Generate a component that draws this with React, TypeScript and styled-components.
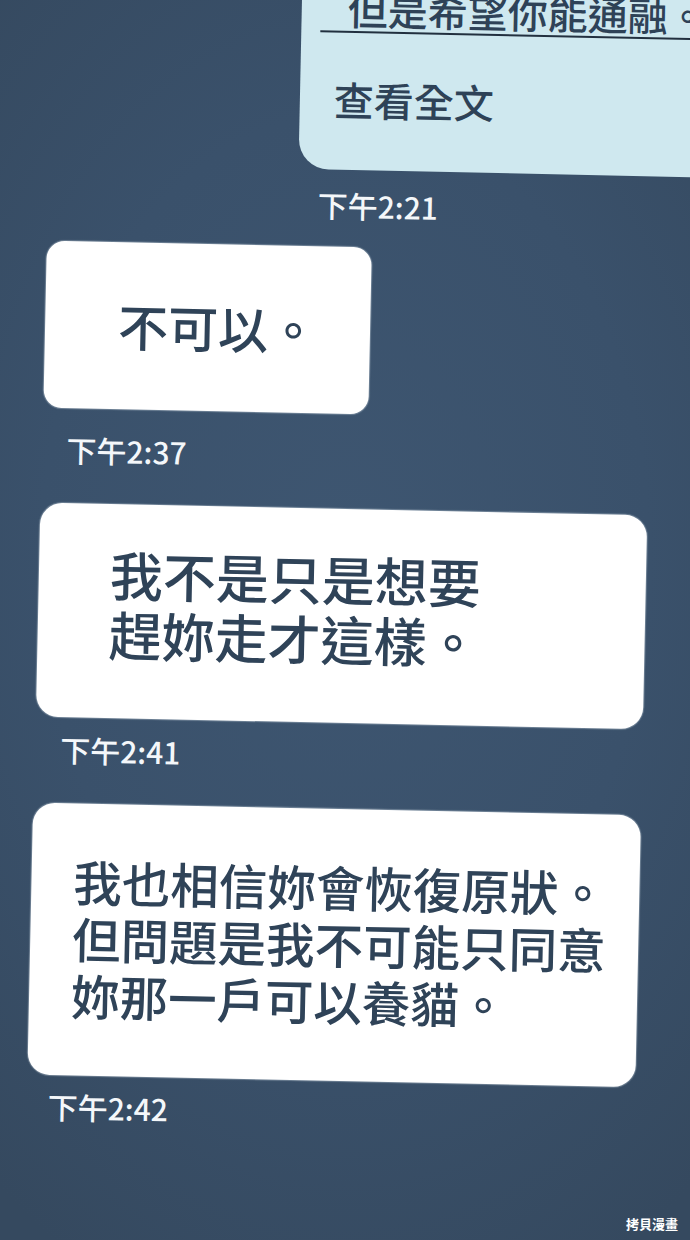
import React from "react";
import styled, { createGlobalStyle } from "styled-components";

const GlobalStyle = createGlobalStyle`
  html, body {
    margin: 0;
    padding: 0;
    background: #34495f;
  }
  body {
    font-family: "Noto Sans CJK TC", "Noto Sans", sans-serif;
  }
`;

const Page = styled.div`
  position: relative;
  width: 690px;
  height: 1240px;
  overflow: hidden;
  background: radial-gradient(
    ellipse 80% 65% at 50% 45%,
    #3e5671 0%,
    #3a516b 55%,
    #35495f 100%
  );
`;

const Scene = styled.div`
  width: 690px;
  height: 1240px;
  display: flex;
  flex-direction: column;
  align-items: flex-start;
  transform: rotate(1.2deg);
  transform-origin: 345px 620px;
  font-family: "Noto Sans CJK TC", "Noto Sans", sans-serif;
`;

const SentBubble = styled.div`
  margin-top: -30px;
  margin-left: 289px;
  width: 480px;
  box-sizing: border-box;
  padding: 15px 0 48px 0;
  background: #cfe8ef;
  border-radius: 0 0 0 30px;
  display: flex;
  flex-direction: column;
  align-items: flex-start;
  color: #2e4257;
`;

const Quote = styled.div`
  margin-left: 46px;
  font-size: 40px;
  line-height: 46px;
  font-weight: 500;
  white-space: nowrap;
`;

const Divider = styled.div`
  margin-left: 19px;
  align-self: stretch;
  height: 2px;
  background: #22303f;
`;

const ViewAll = styled.div`
  margin-top: 43px;
  margin-left: 34px;
  font-size: 40px;
  line-height: 46px;
  font-weight: 500;
`;

const Time = styled.div<{ $left: number; $top: number }>`
  margin-left: ${(p) => p.$left}px;
  margin-top: ${(p) => p.$top}px;
  font-size: 30px;
  line-height: 34px;
  font-weight: 500;
  color: #f4f7fa;
  white-space: nowrap;
`;

const Bubble = styled.div<{
  $left: number;
  $top: number;
  $width: number;
  $height: number;
  $padLeft: number;
  $padBottom: number;
  $size: number;
  $lineHeight: number;
  $radius: number;
}>`
  margin-left: ${(p) => p.$left}px;
  margin-top: ${(p) => p.$top}px;
  width: ${(p) => p.$width}px;
  height: ${(p) => p.$height}px;
  box-sizing: border-box;
  padding-left: ${(p) => p.$padLeft}px;
  padding-bottom: ${(p) => p.$padBottom}px;
  background: #ffffff;
  border-radius: ${(p) => p.$radius}px;
  box-shadow: 0 0 1px 1px rgba(210, 220, 230, 0.35);
  display: flex;
  flex-direction: column;
  justify-content: center;
  color: #2f4358;
  font-size: ${(p) => p.$size}px;
  line-height: ${(p) => p.$lineHeight}px;
  font-weight: 500;
`;

const Line = styled.div`
  white-space: nowrap;
`;

const Watermark = styled.div`
  position: absolute;
  right: 12px;
  bottom: 7px;
  font-family: "Noto Sans CJK TC", sans-serif;
  font-size: 13px;
  line-height: 18px;
  font-weight: 700;
  color: #ffffff;
`;

export default function App() {
  return (
    <>
      <GlobalStyle />
      <Page>
        <Scene>
          <SentBubble>
            <Quote>但是希望你能通融。</Quote>
            <Divider />
            <ViewAll>查看全文</ViewAll>
          </SentBubble>
          <Time $left={309} $top={18}>下午2:21</Time>

          <Bubble
            $left={39}
            $top={25}
            $width={325}
            $height={167}
            $padLeft={73}
            $padBottom={4}
            $size={50}
            $lineHeight={58}
            $radius={18}
          >
            <Line>不可以。</Line>
          </Bubble>
          <Time $left={63} $top={24}>下午2:37</Time>

          <Bubble
            $left={38}
            $top={37}
            $width={607}
            $height={214}
            $padLeft={71}
            $padBottom={16}
            $size={53}
            $lineHeight={60}
            $radius={22}
          >
            <Line>我不是只是想要</Line>
            <Line>趕妳走才這樣。</Line>
          </Bubble>
          <Time $left={63} $top={15}>下午2:41</Time>

          <Bubble
            $left={37}
            $top={37}
            $width={608}
            $height={272}
            $padLeft={42}
            $padBottom={4}
            $size={48.5}
            $lineHeight={57}
            $radius={22}
          >
            <Line>我也相信妳會恢復原狀。</Line>
            <Line>但問題是我不可能只同意</Line>
            <Line>妳那一戶可以養貓。</Line>
          </Bubble>
          <Time $left={58} $top={14}>下午2:42</Time>
        </Scene>
        <Watermark>拷貝漫畫</Watermark>
      </Page>
    </>
  );
}
